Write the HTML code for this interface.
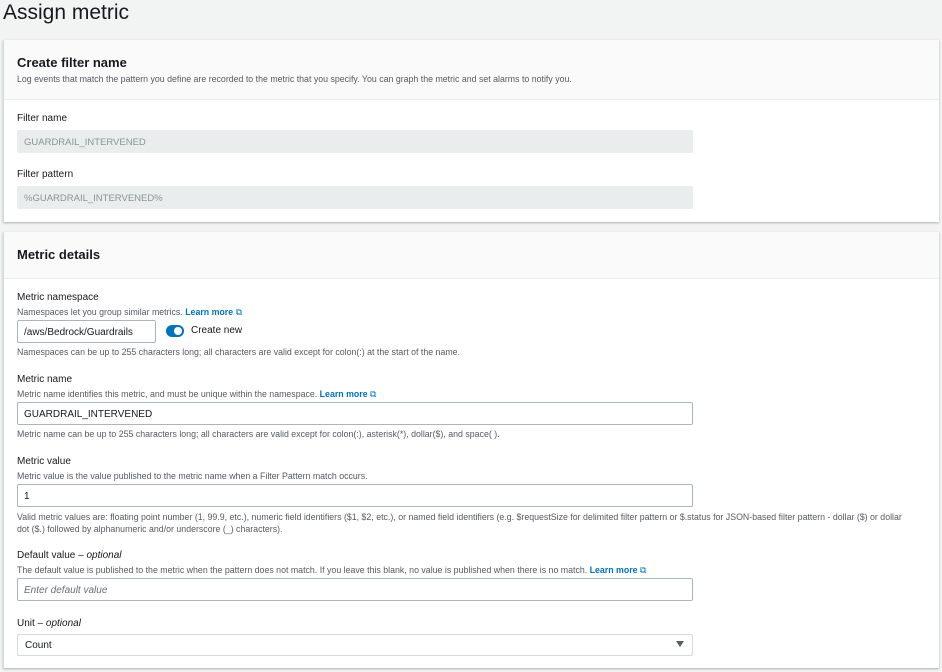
<!DOCTYPE html>
<html><head><style>
body{margin:0;width:942px;height:672px;background:#f2f3f3;font-family:"Liberation Sans",sans-serif;color:#16191f;position:relative;overflow:hidden}
.a{position:absolute;white-space:nowrap}
.panel{position:absolute;left:3px;width:935px;background:#fff;box-shadow:0 1px 2px rgba(0,28,36,.3);border-left:1px solid #d5dbdb}
.hd{position:absolute;left:0;right:0;top:0;background:#fafafa;border-bottom:1px solid #eaeded}
.lbl{font-size:10px;color:#16191f}
.sm{font-size:8.8px;color:#545b64}
.inp{position:absolute;left:17px;width:674px;height:21px;border:1px solid #aab7b8;border-radius:2px;background:#fff;font-size:10px;line-height:21px;padding-left:6px;box-sizing:border-box}
.dis{background:#eaeded;border-color:#eaeded;color:#879596}
.lm{color:#0073bb;font-weight:bold}
</style></head><body>
<div class="a" style="left:3px;top:1px;font-size:21px">Assign metric</div>

<div class="panel" style="top:40px;height:182px">
  <div class="hd" style="height:59px"></div>
  <div class="a" style="left:13px;top:15px;font-size:13px;font-weight:bold">Create filter name</div>
  <div class="a sm" style="left:13px;top:34px">Log events that match the pattern you define are recorded to the metric that you specify. You can graph the metric and set alarms to notify you.</div>
  <div class="a lbl" style="left:13px;top:73px">Filter name</div>
  <div class="inp dis" style="left:13px;top:90px;width:676px;height:23px;line-height:23px;font-size:9.5px">GUARDRAIL_INTERVENED</div>
  <div class="a lbl" style="left:13px;top:129px">Filter pattern</div>
  <div class="inp dis" style="left:13px;top:146px;width:676px;height:23px;line-height:23px;font-size:9.5px">%GUARDRAIL_INTERVENED%</div>
</div>

<div class="panel" style="top:232px;height:436px">
  <div class="hd" style="height:46px"></div>
  <div class="a" style="left:13px;top:15px;font-size:13px;font-weight:bold">Metric details</div>
</div>

<div class="a lbl" style="left:17px;top:292px">Metric namespace</div>
<div class="a sm" style="left:17px;top:307px">Namespaces let you group similar metrics. <span class="lm">Learn more</span> <span style="color:#0073bb">⧉</span></div>
<div class="inp" style="width:139px;top:320px;height:23px;line-height:23px">/aws/Bedrock/Guardrails</div>
<div class="a" style="left:166px;top:325px;width:18px;height:12px;border-radius:6px;background:#0073bb"><div style="position:absolute;right:2px;top:2px;width:8px;height:8px;border-radius:50%;background:#fff"></div></div>
<div class="a" style="left:191px;top:325px;font-size:10px">Create new</div>
<div class="a sm" style="left:17px;top:347px">Namespaces can be up to 255 characters long; all characters are valid except for colon(:) at the start of the name.</div>

<div class="a lbl" style="left:17px;top:374px">Metric name</div>
<div class="a sm" style="left:17px;top:389px">Metric name identifies this metric, and must be unique within the namespace. <span class="lm">Learn more</span> <span style="color:#0073bb">⧉</span></div>
<div class="inp" style="top:402px;width:676px;height:23px;line-height:23px">GUARDRAIL_INTERVENED</div>
<div class="a sm" style="left:17px;top:429px">Metric name can be up to 255 characters long; all characters are valid except for colon(:), asterisk(*), dollar($), and space( ).</div>

<div class="a lbl" style="left:17px;top:456px">Metric value</div>
<div class="a sm" style="left:17px;top:471px">Metric value is the value published to the metric name when a Filter Pattern match occurs.</div>
<div class="inp" style="top:484px;width:676px;height:23px;line-height:23px">1</div>
<div class="a sm" style="left:17px;top:511px;line-height:12px">Valid metric values are: floating point number (1, 99.9, etc.), numeric field identifiers ($1, $2, etc.), or named field identifiers (e.g. $requestSize for delimited filter pattern or $.status for JSON-based filter pattern - dollar ($) or dollar<br>dot ($.) followed by alphanumeric and/or underscore (_) characters).</div>

<div class="a lbl" style="left:17px;top:550px">Default value – <i>optional</i></div>
<div class="a sm" style="left:17px;top:565px">The default value is published to the metric when the pattern does not match. If you leave this blank, no value is published when there is no match. <span class="lm">Learn more</span> <span style="color:#0073bb">⧉</span></div>
<div class="inp" style="top:578px;width:676px;height:23px;line-height:23px;color:#687078;font-style:italic">Enter default value</div>

<div class="a lbl" style="left:17px;top:618px">Unit – <i>optional</i></div>
<div class="inp" style="top:634px;width:676px;height:22px;line-height:22px;padding-left:7px;border-color:#d5dbdb">Count</div>
<div class="a" style="left:676px;top:641px;width:0;height:0;border-left:4.5px solid transparent;border-right:4.5px solid transparent;border-top:6px solid #545b64"></div>
</body></html>
